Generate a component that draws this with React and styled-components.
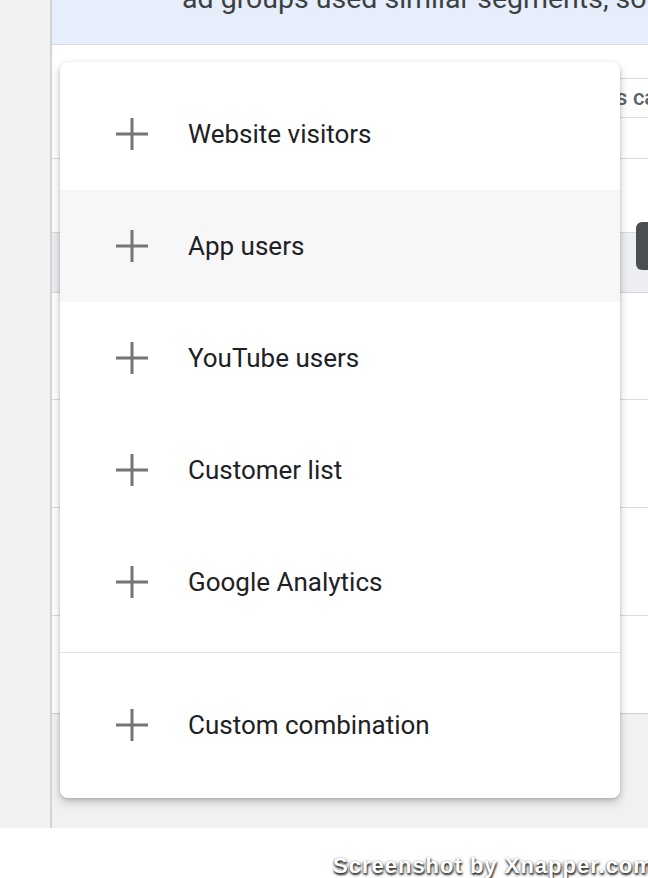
import React from "react";
import styled, { createGlobalStyle } from "styled-components";

const GlobalStyle = createGlobalStyle`
  * {
    box-sizing: border-box;
  }

  body {
    margin: 0;
    background: #fff;
    font-family: Roboto, "Noto Sans", Arial, sans-serif;
  }
`;

const Page = styled.div`
  position: relative;
  width: 648px;
  height: 878px;
  overflow: hidden;
  display: grid;
  grid-template-rows: 828px 50px;
`;

const Workspace = styled.div`
  display: grid;
  grid-template-columns: 52px 1fr;
  background: #f1f1f1;
  min-height: 0;
`;

const SideRail = styled.div`
  background: #f2f2f2;
  border-right: 2px solid #d4d4d4;
`;

const Main = styled.div`
  display: flex;
  flex-direction: column;
  overflow: hidden;
  min-width: 0;
`;

const Banner = styled.div`
  height: 45px;
  flex-shrink: 0;
  background: #e6eefc;
  border-bottom: 1px solid #d6dae0;
  padding-left: 130px;
  overflow: hidden;
`;

const BannerText = styled.p`
  margin: -15px 0 0;
  font-size: 28.5px;
  line-height: 28.5px;
  color: #3c4043;
  white-space: nowrap;
`;

const Table = styled.div`
  display: flex;
  flex-direction: column;
  background: #fff;
  border-bottom: 1px solid #d0d0d0;
`;

const Toolbar = styled.div`
  height: 114px;
  padding-top: 33px;
  border-bottom: 1px solid #dadce0;
  display: flex;
  align-items: flex-start;
`;

const Field = styled.div`
  height: 40px;
  margin-left: 463px;
  padding-left: 12px;
  border: 1px solid #dadce0;
  border-right: none;
  display: flex;
  align-items: center;
  flex: 1;
  min-width: 0;
  overflow: hidden;
  font-size: 22px;
  line-height: 22px;
  font-weight: 500;
  color: #5f6368;
  white-space: nowrap;
`;

const Row = styled.div`
  height: ${(p) => p.$h}px;
  flex-shrink: 0;
  background: ${(p) => (p.$head ? "#edeef1" : "#fff")};
  border-bottom: ${(p) => (p.$last ? "none" : `1px solid ${p.$head ? "#d3d5d9" : "#dadce0"}`)};
`;

const Chip = styled.div`
  position: absolute;
  top: 222px;
  left: 636px;
  width: 30px;
  height: 48px;
  border-radius: 6px;
  background: #4b4f51;
`;

const Menu = styled.div`
  position: absolute;
  top: 62px;
  left: 60px;
  width: 560px;
  padding: 16px 0 17px;
  background: #fff;
  border-radius: 8px;
  box-shadow: 0 4px 10px rgba(0, 0, 0, 0.22), 0 1px 3px rgba(0, 0, 0, 0.15);
`;

const Item = styled.div`
  height: 112px;
  display: flex;
  align-items: center;
  gap: 40px;
  padding-left: 56px;
  background: ${(p) => (p.$hover ? "#f7f7f7" : "transparent")};
  font-size: 26px;
  line-height: 30px;
  color: #202124;
  cursor: pointer;
`;

const Divider = styled.hr`
  margin: 14px 0 16px;
  border: none;
  border-top: 1px solid #e0e0e0;
`;

const Footer = styled.div`
  background: #fff;
  padding: 27px 0 0 333px;
  overflow: hidden;
`;

const Watermark = styled.span`
  font-family: "Liberation Sans", Arial, sans-serif;
  font-weight: 700;
  font-size: 22px;
  line-height: 21px;
  letter-spacing: 1px;
  color: #fff;
  white-space: nowrap;
  text-shadow: 0 1px 3px rgba(0, 0, 0, 0.9), 1px 2px 2px rgba(0, 0, 0, 0.6);
`;

const PlusIcon = () => (
  <svg width="32" height="32" viewBox="0 0 32 32" aria-hidden="true">
    <path d="M16 0v32M0 16h32" stroke="#757575" strokeWidth="3" fill="none" />
  </svg>
);

const options = [
  "Website visitors",
  "App users",
  "YouTube users",
  "Customer list",
  "Google Analytics",
];

export default function App() {
  return (
    <Page>
      <GlobalStyle />
      <Workspace>
        <SideRail />
        <Main>
          <Banner>
            <BannerText>
              ad groups used similar segments, so we combined them
            </BannerText>
          </Banner>
          <Table>
            <Toolbar>
              <Field>Segments can be reused</Field>
            </Toolbar>
            <Row $h={74} />
            <Row $h={60} $head />
            <Row $h={107} />
            <Row $h={108} />
            <Row $h={108} />
            <Row $h={97} $last />
          </Table>
        </Main>
      </Workspace>
      <Footer>
        <Watermark>Screenshot by Xnapper.com</Watermark>
      </Footer>

      <Chip />
      <Menu>
        {options.map((label) => (
          <Item key={label} $hover={label === "App users"}>
            <PlusIcon />
            {label}
          </Item>
        ))}
        <Divider />
        <Item>
          <PlusIcon />
          Custom combination
        </Item>
      </Menu>
    </Page>
  );
}
